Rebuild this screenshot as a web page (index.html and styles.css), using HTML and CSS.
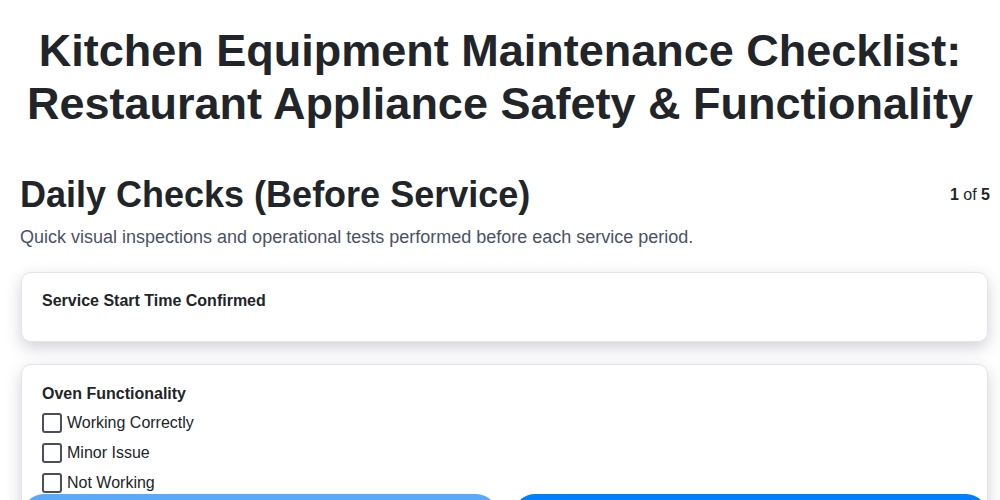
FILE: index.html
```
<!DOCTYPE html>
<html lang="en">
<head>
<meta charset="utf-8">
<title>Kitchen Equipment Maintenance Checklist</title>
<link rel="stylesheet" href="styles.css">
</head>
<body>
<h1 class="title">Kitchen Equipment Maintenance Checklist: Restaurant Appliance Safety &amp; Functionality</h1>
<main class="section">
  <div class="section-head">
    <h2 class="section-title">Daily Checks (Before Service)</h2>
    <div class="step"><b>1</b> of <b>5</b></div>
  </div>
  <p class="section-desc">Quick visual inspections and operational tests performed before each service period.</p>
  <div class="card card-short">
    <div class="field-label">Service Start Time Confirmed</div>
  </div>
  <div class="card">
    <div class="field-label">Oven Functionality</div>
    <label class="option"><input type="checkbox" class="box"><span>Working Correctly</span></label>
    <label class="option"><input type="checkbox" class="box"><span>Minor Issue</span></label>
    <label class="option"><input type="checkbox" class="box"><span>Not Working</span></label>
  </div>
</main>
<nav class="footer">
  <button class="btn btn-prev" type="button">Previous</button>
  <button class="btn btn-next" type="button">Next</button>
</nav>
</body>
</html>
```
FILE: styles.css
```
* { box-sizing: border-box; }
html, body { margin: 0; padding: 0; background: #fff; }
body {
  font-family: "Liberation Sans", Arial, sans-serif;
  color: #212529;
  overflow: hidden;
}
.title {
  margin: 24px 0 0;
  font-size: 45px;
  line-height: 53px;
  font-weight: 700;
  text-align: center;
  padding: 0 10px;
}
.section {
  padding: 43px 10px 0 20px;
}
.section-head {
  display: flex;
  justify-content: space-between;
  align-items: center;
}
.section-title {
  margin: 0;
  font-size: 36px;
  line-height: 1.2;
  font-weight: 700;
}
.step {
  font-size: 16px;
  color: #212529;
}
.section-desc {
  margin: 8px 0 21px;
  font-size: 18px;
  line-height: 1.5;
  color: #4a5264;
}
.card {
  margin: 0 2px 22px 1px;
  border: 1px solid #e4e4ec;
  border-radius: 10px;
  background: #fff;
  padding: 17px 20px 20px;
  box-shadow: 0 6px 16px rgba(50, 50, 80, 0.22);
}
.card-short { height: 70px; padding-top: 16px; }
.field-label {
  font-size: 16px;
  line-height: 24px;
  font-weight: 700;
  margin-bottom: 2px;
}
.option {
  display: flex;
  align-items: center;
  gap: 5px;
  height: 30px;
  font-size: 16px;
  color: #212529;
}
.box {
  appearance: none;
  -webkit-appearance: none;
  margin: 0;
  width: 20px;
  height: 20px;
  border: 2px solid #4b4f5c;
  border-radius: 3px;
  background: #fff;
  flex: none;
}
.footer {
  position: fixed;
  left: 22px;
  right: 12px;
  top: 494px;
  display: grid;
  grid-template-columns: 1fr 1fr;
  gap: 15px;
}
.btn {
  height: 48px;
  padding-top: 20px;
  border: none;
  border-radius: 22px;
  font-family: "Liberation Sans", Arial, sans-serif;
  font-size: 16px;
  font-weight: 700;
  color: #fff;
  background: #007bff;
}
.btn-prev { background: #5aa9fb; }
.btn-next { background: #0080ff; }
```
